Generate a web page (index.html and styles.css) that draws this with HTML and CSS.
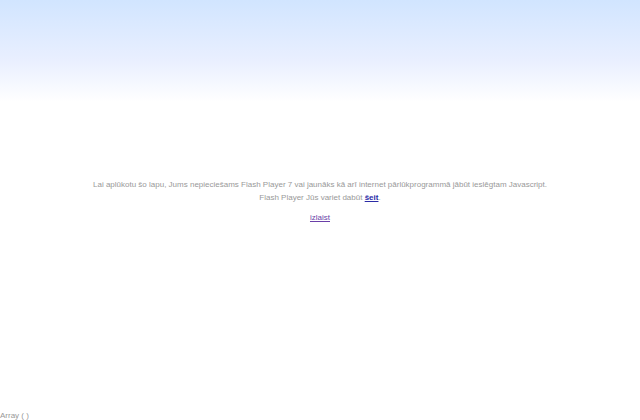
FILE: index.html
```html
<!DOCTYPE html>
<html lang="lv">
<head>
    <meta charset="UTF-8" />
    <title>Flash Player</title>
    <link rel="stylesheet" href="styles.css">
</head>
<body>
    <div class="page">
        <div class="notice">
            <p class="message">
                Lai aplūkotu šo lapu, Jums nepieciešams Flash Player 7 vai jaunāks kā arī internet pārlūkprogrammā jābūt ieslēgtam Javascript.<br>
                Flash Player Jūs variet dabūt <a href="#" class="get-link">šeit</a>.
            </p>
            <p class="skip"><a href="#" class="skip-link">izlaist</a></p>
        </div>
    </div>
    <div class="debug">Array ( )</div>
</body>
</html>
```

FILE: styles.css
```css
* {
    box-sizing: border-box;
}

html, body {
    height: 100%;
}

body {
    margin: 0;
    font-family: 'Liberation Sans', Arial, sans-serif;
    font-size: 8px;
    color: #999999;
    background: linear-gradient(to bottom, #d1e5ff 0px, #e9efff 60px, #ffffff 102px) no-repeat;
    background-color: #ffffff;
    display: flex;
    flex-direction: column;
}

.page {
    flex: 1;
    display: flex;
    align-items: center;
    justify-content: center;
}

.notice {
    text-align: center;
    margin-bottom: 10px;
}

.message {
    margin: 0;
    line-height: 13px;
}

.skip {
    margin: 9px 0 0;
}

.get-link {
    color: #2b2ba6;
    font-weight: bold;
}

.skip-link {
    color: #6a3fa8;
}

.debug {
    line-height: 11px;
    margin-bottom: -1px;
}
```
